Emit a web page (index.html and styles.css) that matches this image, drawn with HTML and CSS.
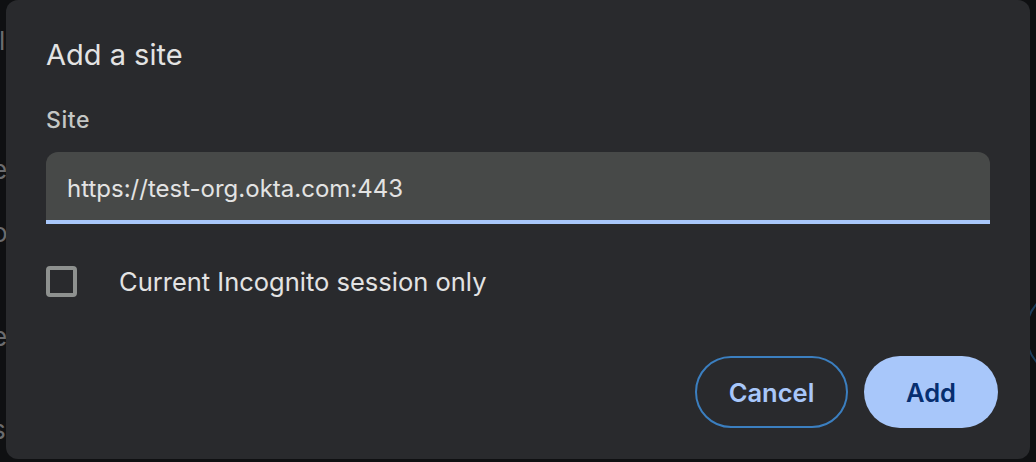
FILE: index.html
```html
<!DOCTYPE html>
<html lang="en">
<head>
<meta charset="utf-8">
<title>Add a site</title>
<link rel="stylesheet" href="styles.css">
</head>
<body>
<div class="backdrop" aria-hidden="true">
  <span class="bg-glyph g1">l</span>
  <span class="bg-glyph g2">e</span>
  <span class="bg-glyph g3">o</span>
  <span class="bg-glyph g4">e</span>
  <span class="bg-glyph g5">s</span>
  <span class="bg-ring"></span>
</div>
<div class="dialog" role="dialog" aria-labelledby="dlg-title">
  <h1 class="title" id="dlg-title">Add a site</h1>
  <label class="field-label" for="site">Site</label>
  <div class="field">
    <span class="field-value" id="site">https://test-org.okta.com:443</span>
  </div>
  <div class="check-row">
    <span class="checkbox"></span>
    <span class="check-label">Current Incognito session only</span>
  </div>
  <div class="actions">
    <button class="btn btn-outline">Cancel</button>
    <button class="btn btn-filled">Add</button>
  </div>
</div>
</body>
</html>
```

FILE: styles.css
```css
* { box-sizing: border-box; }
html, body { margin: 0; padding: 0; }
body {
  width: 1036px;
  height: 462px;
  overflow: hidden;
  background: #0f1012;
  font-family: Inter, "Noto Sans", sans-serif;
  position: relative;
}
.backdrop {
  position: absolute;
  inset: 0;
  z-index: 0;
  overflow: hidden;
}
.bg-glyph {
  position: absolute;
  left: -8px;
  font-size: 26px;
  line-height: 30px;
  color: #6b6c6f;
}
.g1 { top: 26px; left: -1px; }
.g2 { top: 155px; }
.g3 { top: 218px; }
.g4 { top: 322px; }
.g5 { top: 415px; }
.bg-ring {
  position: absolute;
  left: 1025px;
  top: 287px;
  width: 92px;
  height: 92px;
  border: 2px solid #1c3d5c;
  border-radius: 50%;
}
.dialog {
  position: relative;
  z-index: 1;
  margin-left: 6px;
  width: 1024px;
  height: 459px;
  background: #292a2d;
  border-radius: 12px;
  padding: 37px 32px 31px 40px;
  display: flex;
  flex-direction: column;
}
.title {
  margin: 0;
  font-size: 29px;
  line-height: 36px;
  font-weight: 400;
  color: #e3e3e3;
}
.field-label {
  margin-top: 34px;
  font-size: 23px;
  line-height: 26px;
  font-weight: 500;
  color: #c4c7c5;
  letter-spacing: 0.6px;
}
.field {
  margin-top: 19px;
  margin-right: 8px;
  height: 72px;
  background: #474948;
  border-radius: 12px 12px 0 0;
  border-bottom: 4px solid #a8c7fa;
  padding: 22px 21px 0;
}
.field-value {
  display: block;
  font-size: 24px;
  line-height: 30px;
  color: #e3e3e3;
}
.check-row {
  margin-top: 42px;
  display: flex;
  align-items: center;
  gap: 42px;
}
.checkbox {
  width: 31px;
  height: 31px;
  border: 4px solid #8e918f;
  border-radius: 4px;
}
.check-label {
  font-size: 25.5px;
  line-height: 30px;
  color: #e3e3e3;
}
.actions {
  margin-top: auto;
  display: flex;
  justify-content: flex-end;
  gap: 16px;
}
.btn {
  height: 72px;
  border-radius: 36px;
  font-family: inherit;
  font-size: 25.5px;
  font-weight: 600;
  padding: 0;
  cursor: pointer;
}
.btn-outline {
  width: 153px;
  background: transparent;
  border: 2px solid #3b7fc0;
  color: #a8c7fa;
}
.btn-filled {
  width: 134px;
  background: #a8c7fa;
  border: none;
  color: #062e6f;
}
```
